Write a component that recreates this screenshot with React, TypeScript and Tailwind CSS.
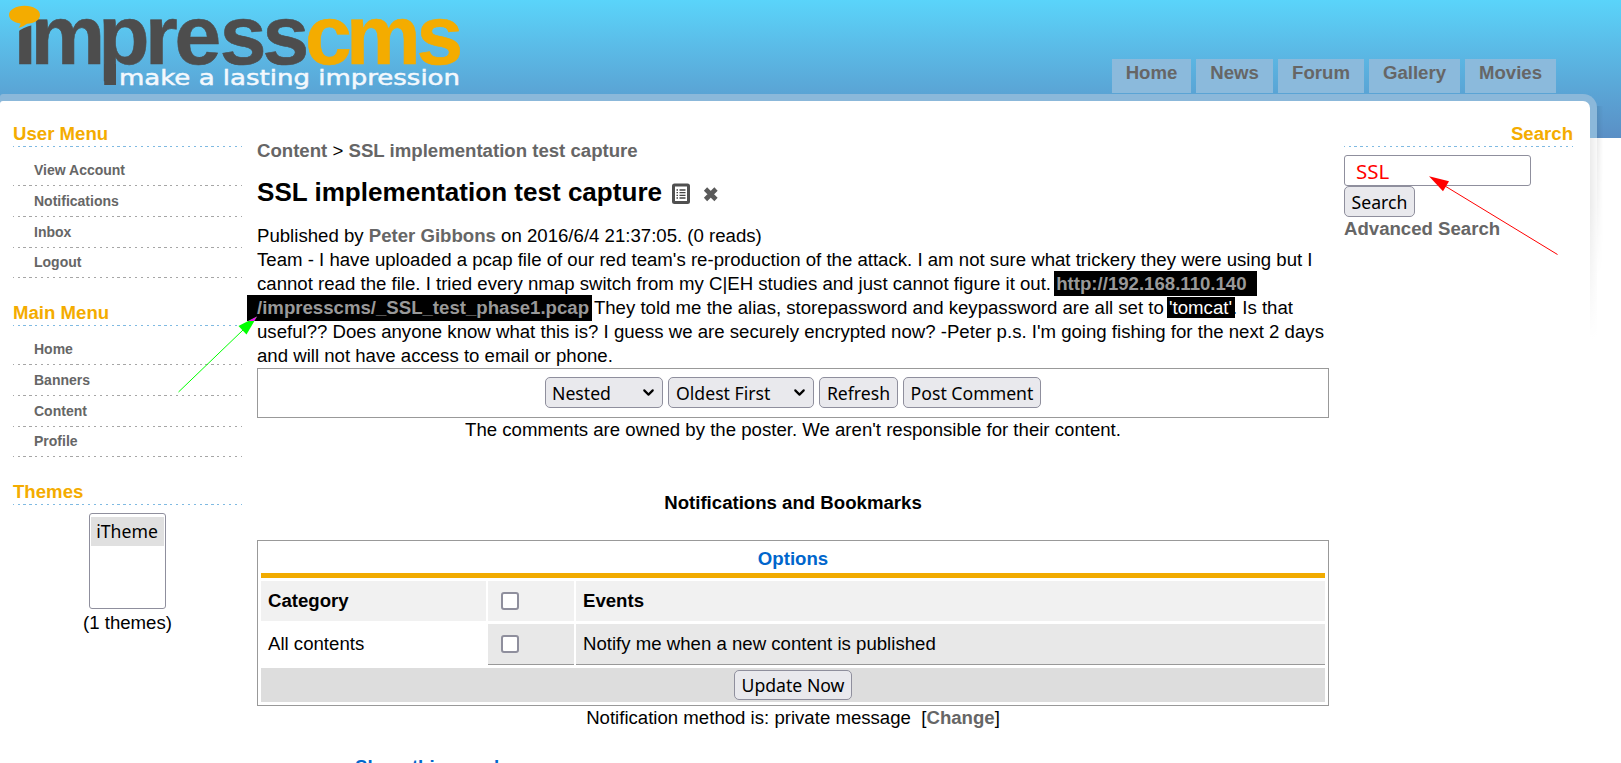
import React from "react";
import { ChevronDown } from "lucide-react";

const CONTROL =
  "flex items-center rounded-[5px] border border-[#8f8f9d] bg-[#e9e9ed] pt-[2px] font-['Noto_Sans',sans-serif] text-[17.65px] leading-none text-black whitespace-nowrap";

const LINK = "font-bold text-[#666]";

function Rule({ blue = false }: { blue?: boolean }) {
  return (
    <div
      className={
        blue
          ? "h-px w-[229px] bg-[repeating-linear-gradient(90deg,#7fbae2_0_1px,transparent_1px_4.6px,#7fbae2_4.6px_5.87px)]"
          : "h-px w-[229px] bg-[repeating-linear-gradient(90deg,#a6a6a6_0_1px,transparent_1px_4.6px,#a6a6a6_4.6px_5.87px)]"
      }
    />
  );
}

function Menu({ title, items }: { title: string; items: { label: string; h: string }[] }) {
  return (
    <section>
      <h2 className="h-[24px] font-bold text-[#f4ac00]">{title}</h2>
      <Rule blue />
      <ul className="pt-[8px]">
        {items.map((item) => (
          <li key={item.label} className={"flex flex-col justify-end " + item.h}>
            <a className="h-[27px] pl-[21px] text-[14px] leading-[24px] font-bold text-[#666]">{item.label}</a>
            <Rule />
          </li>
        ))}
      </ul>
    </section>
  );
}

function Logo() {
  return (
    <svg className="block h-[94px] w-[480px]" viewBox="0 0 480 94">
      <g fontFamily="Liberation Sans" fontWeight="bold" fontSize="84" strokeWidth="0.6">
        <text y="63.700" x="13.5 30.4 98.3 145 174.6 219.7 262.5" fill="#4d4d4d" stroke="#4d4d4d">ımpress</text>
        <text y="63.700" x="305 346 416.5" fill="#f4ac00" stroke="#f4ac00">cms</text>
      </g>
      <rect x="104.200" y="64" width="11.800" height="21" fill="#4d4d4d" />
      <path d="M17 32.500Q23 27 33 25L33 14L17 14Z" fill="#5ac6f0" />
      <path d="M24.500 5.700c8.600 0 15.500 4 15.500 9.200s-6 8.500-13 8.900c-2 1.500-4.500 3-8.500 4 1.400-1.600 2-3 2-4.400C14 22.500 9 19.300 9 14.900c0-5.200 7-9.200 15.500-9.200z" fill="#f4ac00" />
      <text x="119" y="85" fontFamily="DejaVu Sans" fontSize="21.500" fill="#f3f8fd" stroke="#f3f8fd" strokeWidth="0.500" textLength="341" lengthAdjust="spacingAndGlyphs">
        make a lasting impression
      </text>
    </svg>
  );
}

function Checkbox() {
  return <span className="block size-[18px] rounded-[3px] border-2 border-[#8f8f9d] bg-white" />;
}

const TABS = [
  { label: "Home", w: "w-[79px]" },
  { label: "News", w: "w-[77px]" },
  { label: "Forum", w: "w-[86px]" },
  { label: "Gallery", w: "w-[91px]" },
  { label: "Movies", w: "w-[91px]" },
];

export default function App() {
  return (
    <div className="relative h-[763px] w-[1621px] overflow-hidden bg-white font-['Liberation_Sans',Arial,sans-serif] text-[18.62px] leading-[24px] text-black">
      <header className="flex h-[138px] items-start justify-between bg-linear-to-b from-[#5ad4fa] via-[#5aa9d9] via-60% to-[#5a8fc5] pr-[65px]">
        <Logo />
        <nav className="flex gap-[5px] pt-[59px]">
          {TABS.map((t) => (
            <a key={t.label} className={"h-[34px] bg-[#8bbadc] pt-[2px] text-center font-bold text-[#666] " + t.w}>
              {t.label}
            </a>
          ))}
        </nav>
      </header>

      <div className="relative -mt-[44px] h-[669px] w-[1597px] rounded-tl-[3px] rounded-tr-[14px] bg-[linear-gradient(to_bottom,#8bb8da_0_44px,transparent_44px),linear-gradient(to_bottom,transparent_110px,#ffffff_245px),linear-gradient(to_left,#f9f9f9_0,#ebebeb_7px,#ffffff_8px)] pt-[7px] pr-[7px]">
        <span className="absolute top-[12px] -right-[6px] h-[170px] w-[6px] bg-linear-to-r from-black/8 to-transparent mask-b-from-20%" />
        <div className="flex h-[662px] items-start rounded-tl-[3px] rounded-tr-[7px] bg-white pl-[13px]">
          <aside className="flex w-[244px] flex-col pt-[21px]">
            <div className="h-[179px]">
              <Menu
                title="User Menu"
                items={[
                  { label: "View Account", h: "h-[31px]" },
                  { label: "Notifications", h: "h-[31px]" },
                  { label: "Inbox", h: "h-[31px]" },
                  { label: "Logout", h: "h-[30px]" },
                ]}
              />
            </div>
            <div className="h-[179px]">
              <Menu
                title="Main Menu"
                items={[
                  { label: "Home", h: "h-[31px]" },
                  { label: "Banners", h: "h-[31px]" },
                  { label: "Content", h: "h-[31px]" },
                  { label: "Profile", h: "h-[30px]" },
                ]}
              />
            </div>
            <section className="w-[229px]">
              <h2 className="h-[24px] font-bold text-[#f4ac00]">Themes</h2>
              <Rule blue />
              <div className="flex flex-col items-center pt-[8px] pr-px">
                <div className="h-[96px] w-[77px] rounded-[3px] border border-[#8f8f9d] bg-white px-px pt-[3px]">
                  <div className="h-[29px] bg-[#e0e0e0] text-center font-['Noto_Sans',sans-serif] text-[17.65px] leading-[29px]">iTheme</div>
                </div>
                <p className="pt-[2px] pl-px">(1 themes)</p>
              </div>
            </section>
          </aside>

          <main className="w-[1072px] pt-[38px]">
            <p className="h-[38px] whitespace-nowrap">
              <a className={LINK}>Content</a> &gt; <a className={LINK}>SSL implementation test capture</a>
            </p>
            <div className="flex h-[47px] items-start">
              <h1 className="text-[26.07px] leading-[30px] font-bold whitespace-nowrap">SSL implementation test capture</h1>
              <svg className="mt-[6px] ml-[10px] h-[22px] w-[18px]" viewBox="0 0 18 22">
                <rect x="1.500" y="2" width="15" height="17.500" rx="1" fill="#fff" stroke="#505050" strokeWidth="3" />
                <path d="M4.500 7h1.500M4.500 9.700h1.500M4.500 12.400h1.500M4.500 15h1.500M7.500 7h6M7.500 9.700h6M7.500 12.400h6M7.500 15h6" stroke="#444" strokeWidth="1.300" />
              </svg>
              <svg className="mt-[9px] ml-[13px] h-[16px] w-[16px]" viewBox="0 0 16 16">
                <path d="M2.500 3L13 13.500M13 3L2.500 13.500" stroke="#5a5a5a" strokeWidth="4.600" />
              </svg>
            </div>
            <div className="whitespace-nowrap">
              <p>
                Published by <a className={LINK}>Peter Gibbons</a> on 2016/6/4 21:37:05. (0 reads)
              </p>
              <p>Team - I have uploaded a pcap file of our red team's re-production of the attack. I am not sure what trickery they were using but I</p>
              <p>
                cannot read the file. I tried every nmap switch from my C|EH studies and just cannot figure it out.{" "}
                <a className="-mx-[2px] bg-black pt-[2px] pr-[10px] pb-[2px] pl-[2px] font-bold text-[#999]">http://192.168.110.140</a>
              </p>
              <p>
                <a className="-mr-[3px] -ml-[10px] bg-black pt-[2px] pr-[3px] pb-[3px] pl-[10px] font-bold text-[#999]">/impresscms/_SSL_test_phase1.pcap</a>{" "}
                They told me the alias, storepassword and keypassword are all set to{" "}
                <span className="-mr-[3px] -ml-[2px] bg-black pr-[3px] pl-[2px] text-white">'tomcat'</span>. Is that
              </p>
              <p>useful?? Does anyone know what this is? I guess we are securely encrypted now? -Peter p.s. I'm going fishing for the next 2 days</p>
              <p>and will not have access to email or phone.</p>
            </div>

            <div className="flex h-[50px] items-start justify-center gap-[5px] border border-[#999] pt-[8px]">
              <div className={CONTROL + " h-[31px] w-[118px] justify-between pr-[5px] pl-[6px]"}>
                Nested
                <ChevronDown className="-mt-[2px]" size={17} strokeWidth={3} />
              </div>
              <div className={CONTROL + " h-[31px] w-[146px] justify-between pr-[5px] pl-[7px]"}>
                Oldest First
                <ChevronDown className="-mt-[2px]" size={17} strokeWidth={3} />
              </div>
              <button className={CONTROL + " h-[31px] w-[79px] justify-center"}>Refresh</button>
              <button className={CONTROL + " h-[31px] w-[138px] justify-center"}>Post Comment</button>
            </div>
            <p className="h-[73px] text-center">The comments are owned by the poster. We aren't responsible for their content.</p>
            <h3 className="h-[49px] text-center font-bold">Notifications and Bookmarks</h3>

            <div className="flex h-[166px] flex-col border border-[#999] px-[3px] pt-[3px]">
              <div className="h-[34px] border-b-[5px] border-[#f1ab00] pt-[3px] text-center leading-[24px] font-bold text-[#0066cc]">Options</div>
              <div className="mt-[3px] grid h-[40px] grid-cols-[225px_86px_1fr] gap-x-[2px] font-bold">
                <div className="bg-[#f1f1f1] pl-[7px] leading-[40px]">Category</div>
                <div className="flex items-center bg-[#f1f1f1] pl-[13px]">
                  <Checkbox />
                </div>
                <div className="bg-[#f1f1f1] pl-[7px] leading-[40px]">Events</div>
              </div>
              <div className="mt-[3px] grid h-[41px] grid-cols-[225px_86px_1fr] gap-x-[2px]">
                <div className="pl-[7px] leading-[40px]">All contents</div>
                <div className="flex items-center border-b border-[#999] bg-[#e8e8e8] pl-[13px]">
                  <Checkbox />
                </div>
                <div className="border-b border-[#999] bg-[#e8e8e8] pl-[7px] leading-[40px]">Notify me when a new content is published</div>
              </div>
              <div className="mt-[3px] flex h-[34px] items-center justify-center bg-[#ddd]">
                <button className={CONTROL + " h-[30px] w-[118px] justify-center"}>Update Now</button>
              </div>
            </div>
            <p className="h-[49px] text-center">
              Notification method is: private message&nbsp; [<a className={LINK}>Change</a>]
            </p>
            <p className="pl-[98px] font-bold text-[#0066cc]">Share this page!</p>
          </main>

          <aside className="ml-[15px] w-[229px] pt-[21px]">
            <h2 className="h-[24px] text-right font-bold text-[#f4ac00]">Search</h2>
            <Rule blue />
            <div className="mt-[8px] h-[31px] w-[187px] rounded-[3px] border border-[#8f8f9d] bg-white pl-[11px] font-['Noto_Sans',sans-serif] text-[20.5px] leading-[30px] text-[#f00]">
              SSL
            </div>
            <button className={CONTROL + " h-[31px] w-[71px] justify-center"}>Search</button>
            <a className={LINK + " block"}>Advanced Search</a>
          </aside>
        </div>
      </div>

      <svg className="pointer-events-none absolute top-0 left-0" width="1621" height="763" viewBox="0 0 1621 763">
        <path d="M178.500 392L243 330" stroke="#0f0" strokeWidth="1" />
        <path d="M257 316.500L238.500 326L246.500 334.500Z" fill="#0f0" />
        <path d="M257 316.500L248.200 321H254Z" fill="#f0f" />
        <path d="M1557.500 254.500L1445 186" stroke="#f00" strokeWidth="1" />
        <path d="M1429 176.300L1449 181.300L1443 191.300Z" fill="#f00" />
      </svg>
    </div>
  );
}
